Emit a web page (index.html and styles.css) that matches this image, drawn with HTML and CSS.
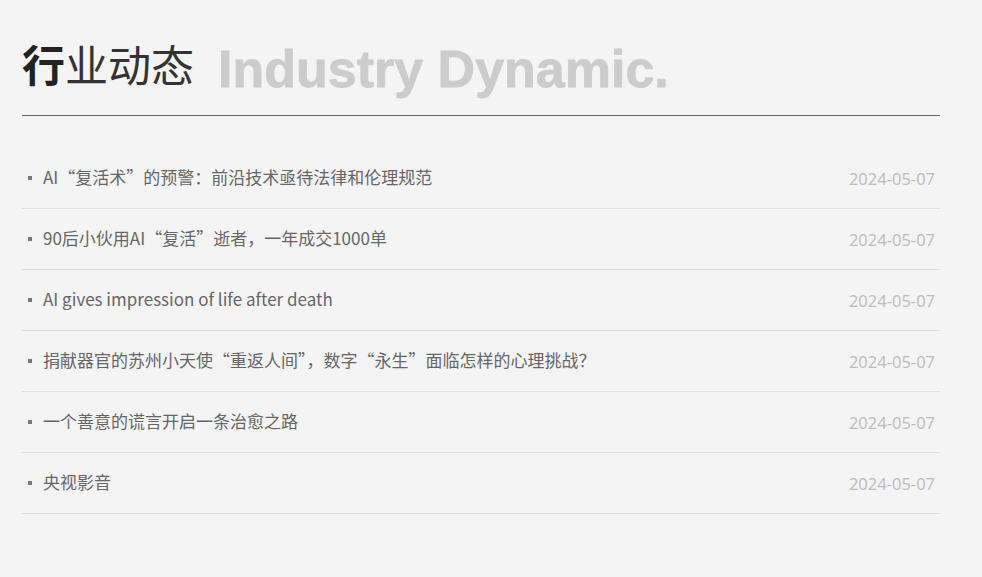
FILE: index.html
```html
<!DOCTYPE html>
<html lang="zh-CN">
<head>
    <meta charset="UTF-8">
    <meta name="viewport" content="width=device-width, initial-scale=1.0">
    <title>行业动态</title>
    <link rel="stylesheet" href="styles.css">
</head>
<body>

  <div class="news">
    <div class="news-title">
      <h2 class="title-cn"><b>行</b>业动态</h2>
      <span class="title-en">Industry Dynamic.</span>
    </div>

    <ul class="news-list">
      <li><a href="#">AI“复活术”的预警：前沿技术亟待法律和伦理规范</a><span class="date">2024-05-07</span></li>
      <li><a href="#">90后小伙用AI“复活”逝者，一年成交1000单</a><span class="date">2024-05-07</span></li>
      <li><a href="#">AI gives impression of life after death</a><span class="date">2024-05-07</span></li>
      <li><a href="#">捐献器官的苏州小天使“重返人间”，数字“永生”面临怎样的心理挑战？</a><span class="date">2024-05-07</span></li>
      <li><a href="#">一个善意的谎言开启一条治愈之路</a><span class="date">2024-05-07</span></li>
      <li><a href="#">央视影音</a><span class="date">2024-05-07</span></li>
    </ul>
  </div>

</body>
</html>
```

FILE: styles.css
```css
body {
  margin: 0;
  background-color: #f4f4f4;
  font-family: "Noto Sans CJK SC", "Noto Sans", sans-serif;
}

.news {
  width: 918px;
  margin-left: 22px;
}

.news-title {
  display: flex;
  align-items: baseline;
  height: 116px;
  border-bottom: 1px solid #666;
  box-sizing: border-box;
  padding-top: 34px;
}

.title-cn {
  margin: 0;
  font-size: 43px;
  font-weight: normal;
  color: #333;
  line-height: 1.2;
}

.title-cn b {
  color: #222;
}

.title-en {
  position: relative;
  top: 5px;
  margin-left: 24px;
  font-family: "Liberation Sans", Arial, sans-serif;
  font-weight: bold;
  font-size: 52px;
  color: #ccc;
  -webkit-text-stroke: 0.8px #ccc;
}

.news-list {
  list-style: none;
  margin: 0;
  padding: 32px 0 0;
}

.news-list li {
  display: flex;
  justify-content: space-between;
  align-items: center;
  height: 61px;
  border-bottom: 1px solid #ddd;
  box-sizing: border-box;
  padding: 0 5px 0 21px;
  position: relative;
}

.news-list li::before {
  content: "";
  position: absolute;
  left: 6px;
  top: 28px;
  width: 4px;
  height: 4px;
  background: #777;
}

.news-list a {
  color: #666;
  font-size: 17px;
  text-decoration: none;
  margin-top: -3px;
}

.date {
  color: #bbb;
  font-family: "Open Sans", sans-serif;
  font-size: 16.5px;
  margin-top: 1px;
}
```
